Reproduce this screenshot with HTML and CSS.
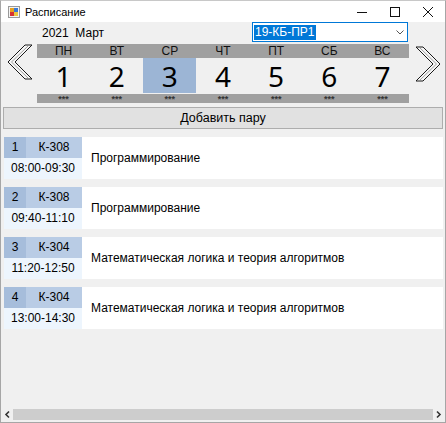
FILE: index.html
```html
<!DOCTYPE html>
<html>
<head>
<meta charset="utf-8">
<link rel="stylesheet" href="styles.css">
</head>
<body>
<div class="window">
  <div class="titlebar">
    <svg class="app-icon" width="12" height="12" viewBox="0 0 12 12">
      <rect x="0.5" y="0.5" width="11" height="11" fill="#f4f4f4" stroke="#9a9a9a"/>
      <rect x="2" y="2" width="4" height="4" fill="#e8a020"/>
      <rect x="6" y="2" width="4" height="4" fill="#3a7bd5"/>
      <rect x="2" y="6" width="4" height="4" fill="#d83030"/>
      <rect x="6" y="6" width="4" height="4" fill="#e8c840"/>
    </svg>
    <span class="title">Расписание</span>
    <div class="controls">
      <svg width="10" height="10" viewBox="0 0 10 10"><line x1="0" y1="5.5" x2="10" y2="5.5" stroke="#111" stroke-width="1"/></svg>
      <svg width="10" height="10" viewBox="0 0 10 10"><rect x="0.5" y="0.5" width="9" height="9" fill="none" stroke="#111" stroke-width="1"/></svg>
      <svg width="10" height="10" viewBox="0 0 10 10"><path d="M0 0 L10 10 M10 0 L0 10" stroke="#111" stroke-width="1"/></svg>
    </div>
  </div>
  <div class="content">
    <div class="calendar">
      <div class="nav nav-left">
        <svg width="28" height="36" viewBox="0 0 28 36">
          <polygon points="19,1 26,1 9,18 26,35 19,35 2,18" fill="#f6f6f6" stroke="#1a1a1a" stroke-width="1"/>
          <polyline points="22,2 5.5,18 22,34" fill="none" stroke="#a0a0a0" stroke-width="1"/>
        </svg>
      </div>
      <div class="cal-main">
        <div class="cal-top">
          <span class="month">2021&nbsp; Март</span>
          <div class="combo">
            <span class="combo-sel">19-КБ-ПР1</span>
            <svg class="combo-arrow" width="8" height="5" viewBox="0 0 8 5"><polyline points="0.5,0.5 4,4 7.5,0.5" fill="none" stroke="#555" stroke-width="1"/></svg>
          </div>
        </div>
        <div class="days-head">
          <span>ПН</span><span>ВТ</span><span>СР</span><span>ЧТ</span><span>ПТ</span><span>СБ</span><span>ВС</span>
        </div>
        <div class="days-num">
          <span>1</span><span>2</span><span class="sel">3</span><span>4</span><span>5</span><span>6</span><span>7</span>
        </div>
        <div class="days-stars">
          <span>***</span><span>***</span><span>***</span><span>***</span><span>***</span><span>***</span><span>***</span>
        </div>
      </div>
      <div class="nav nav-right">
        <svg width="28" height="36" viewBox="0 0 28 36">
          <polygon points="9,1 2,1 19,18 2,35 9,35 26,18" fill="#f6f6f6" stroke="#1a1a1a" stroke-width="1"/>
          <polyline points="6,2 22.5,18 6,34" fill="none" stroke="#a0a0a0" stroke-width="1"/>
        </svg>
      </div>
    </div>
    <div class="add-btn">Добавить пару</div>
    <div class="list">
      <div class="row">
        <div class="meta">
          <div class="meta-top"><span class="num">1</span><span class="room">К-308</span></div>
          <div class="time">08:00-09:30</div>
        </div>
        <div class="subject">Программирование</div>
      </div>
      <div class="row">
        <div class="meta">
          <div class="meta-top"><span class="num">2</span><span class="room">К-308</span></div>
          <div class="time">09:40-11:10</div>
        </div>
        <div class="subject">Программирование</div>
      </div>
      <div class="row">
        <div class="meta">
          <div class="meta-top"><span class="num">3</span><span class="room">К-304</span></div>
          <div class="time">11:20-12:50</div>
        </div>
        <div class="subject">Математическая логика и теория алгоритмов</div>
      </div>
      <div class="row">
        <div class="meta">
          <div class="meta-top"><span class="num">4</span><span class="room">К-304</span></div>
          <div class="time">13:00-14:30</div>
        </div>
        <div class="subject">Математическая логика и теория алгоритмов</div>
      </div>
    </div>
    <div class="hscroll">
      <svg class="sb-arrow" width="11" height="11" viewBox="0 0 11 11"><polyline points="7,2.5 4,5.5 7,8.5" fill="none" stroke="#333" stroke-width="1.6"/></svg>
      <div class="sb-thumb"></div>
      <svg class="sb-arrow" width="11" height="11" viewBox="0 0 11 11"><polyline points="4,2.5 7,5.5 4,8.5" fill="none" stroke="#333" stroke-width="1.6"/></svg>
    </div>
  </div>
</div>
</body>
</html>
```
FILE: styles.css
```css
html, body {
  margin: 0;
  padding: 0;
  background: #ffffff;
}
body {
  font-family: "Liberation Sans", Arial, sans-serif;
  font-size: 12px;
  color: #000;
}
.window {
  width: 446px;
  height: 423px;
  box-sizing: border-box;
  border: 1px solid #a6a6a6;
  border-top-color: #c8c8c8;
  display: flex;
  flex-direction: column;
  background: #f0f0f0;
}
.titlebar {
  height: 21px;
  background: #ffffff;
  display: flex;
  align-items: center;
  padding-left: 7px;
  flex: none;
}
.app-icon {
  margin-right: 5px;
}
.title {
  font-size: 11px;
  color: #000;
}
.controls {
  margin-left: auto;
  display: flex;
  align-items: center;
  gap: 23px;
  padding-right: 12px;
}
.content {
  flex: 1;
  display: flex;
  flex-direction: column;
  background: #f0f0f0;
  min-height: 0;
}
.calendar {
  display: flex;
  height: 81px;
  flex: none;
}
.nav {
  width: 36px;
  display: flex;
  align-items: flex-start;
  box-sizing: border-box;
  padding-left: 5px;
}
.nav-left {
  padding-top: 22px;
}
.nav-right {
  padding-top: 24px;
}
.cal-main {
  width: 372px;
  display: flex;
  flex-direction: column;
}
.cal-top {
  height: 22px;
  display: flex;
  align-items: flex-start;
}
.month {
  font-size: 12px;
  margin-left: 5px;
  margin-top: 4px;
}
.combo {
  margin-left: auto;
  width: 156px;
  height: 20px;
  margin-right: 1px;
  box-sizing: border-box;
  border: 1px solid #0078d7;
  background: #fff;
  display: flex;
  align-items: center;
  padding-left: 1px;
}
.combo-sel {
  background: #0078d7;
  color: #fff;
  font-size: 12px;
  line-height: 15px;
  padding: 0 1px;
}
.combo-arrow {
  margin-left: auto;
  margin-right: 3px;
}
.days-head, .days-num, .days-stars {
  display: grid;
  grid-template-columns: repeat(7, 1fr);
  text-align: center;
}
.days-head {
  background: #a0a0a0;
  height: 14px;
  font-size: 12px;
  line-height: 15px;
  color: #111;
}
.days-num {
  height: 35px;
}
.days-num span {
  font-family: "Noto Sans", "Open Sans", sans-serif;
  font-size: 28px;
  display: flex;
  align-items: center;
  justify-content: center;
  line-height: 1;
  padding-top: 1px;
}
.days-num .sel {
  background: #9cb5d5;
}
.days-stars {
  margin-top: 1px;
  background: #a0a0a0;
  height: 9px;
  font-size: 9px;
  line-height: 11px;
  font-weight: bold;
  color: #333;
}
.add-btn {
  margin: 4px 2px 0 2px;
  height: 22px;
  box-sizing: border-box;
  background: #e1e1e1;
  border: 1px solid #adadad;
  text-align: center;
  font-size: 12.5px;
  line-height: 20px;
  flex: none;
}
.list {
  flex: 1;
  display: flex;
  flex-direction: column;
  gap: 8px;
  padding: 8px 2px 0 3px;
}
.row {
  height: 42px;
  background: #ffffff;
  display: flex;
  flex: none;
}
.meta {
  width: 78px;
  display: flex;
  flex-direction: column;
}
.meta-top {
  display: flex;
  height: 21px;
  font-size: 12px;
  line-height: 21px;
}
.num {
  width: 22px;
  background: #a6bddb;
  text-align: center;
}
.room {
  flex: 1;
  background: #b9cce5;
  text-align: center;
}
.time {
  flex: 1;
  background: #edf5fd;
  text-align: center;
  font-size: 12px;
  line-height: 21px;
}
.subject {
  padding-left: 9px;
  font-size: 12px;
  display: flex;
  align-items: center;
}
.hscroll {
  height: 11px;
  margin: 0 1px 2px 1px;
  display: flex;
  align-items: center;
  flex: none;
}
.sb-arrow {
  flex: none;
}
.sb-thumb {
  flex: 1;
  height: 11px;
  background: #cdcdcd;
}
```
